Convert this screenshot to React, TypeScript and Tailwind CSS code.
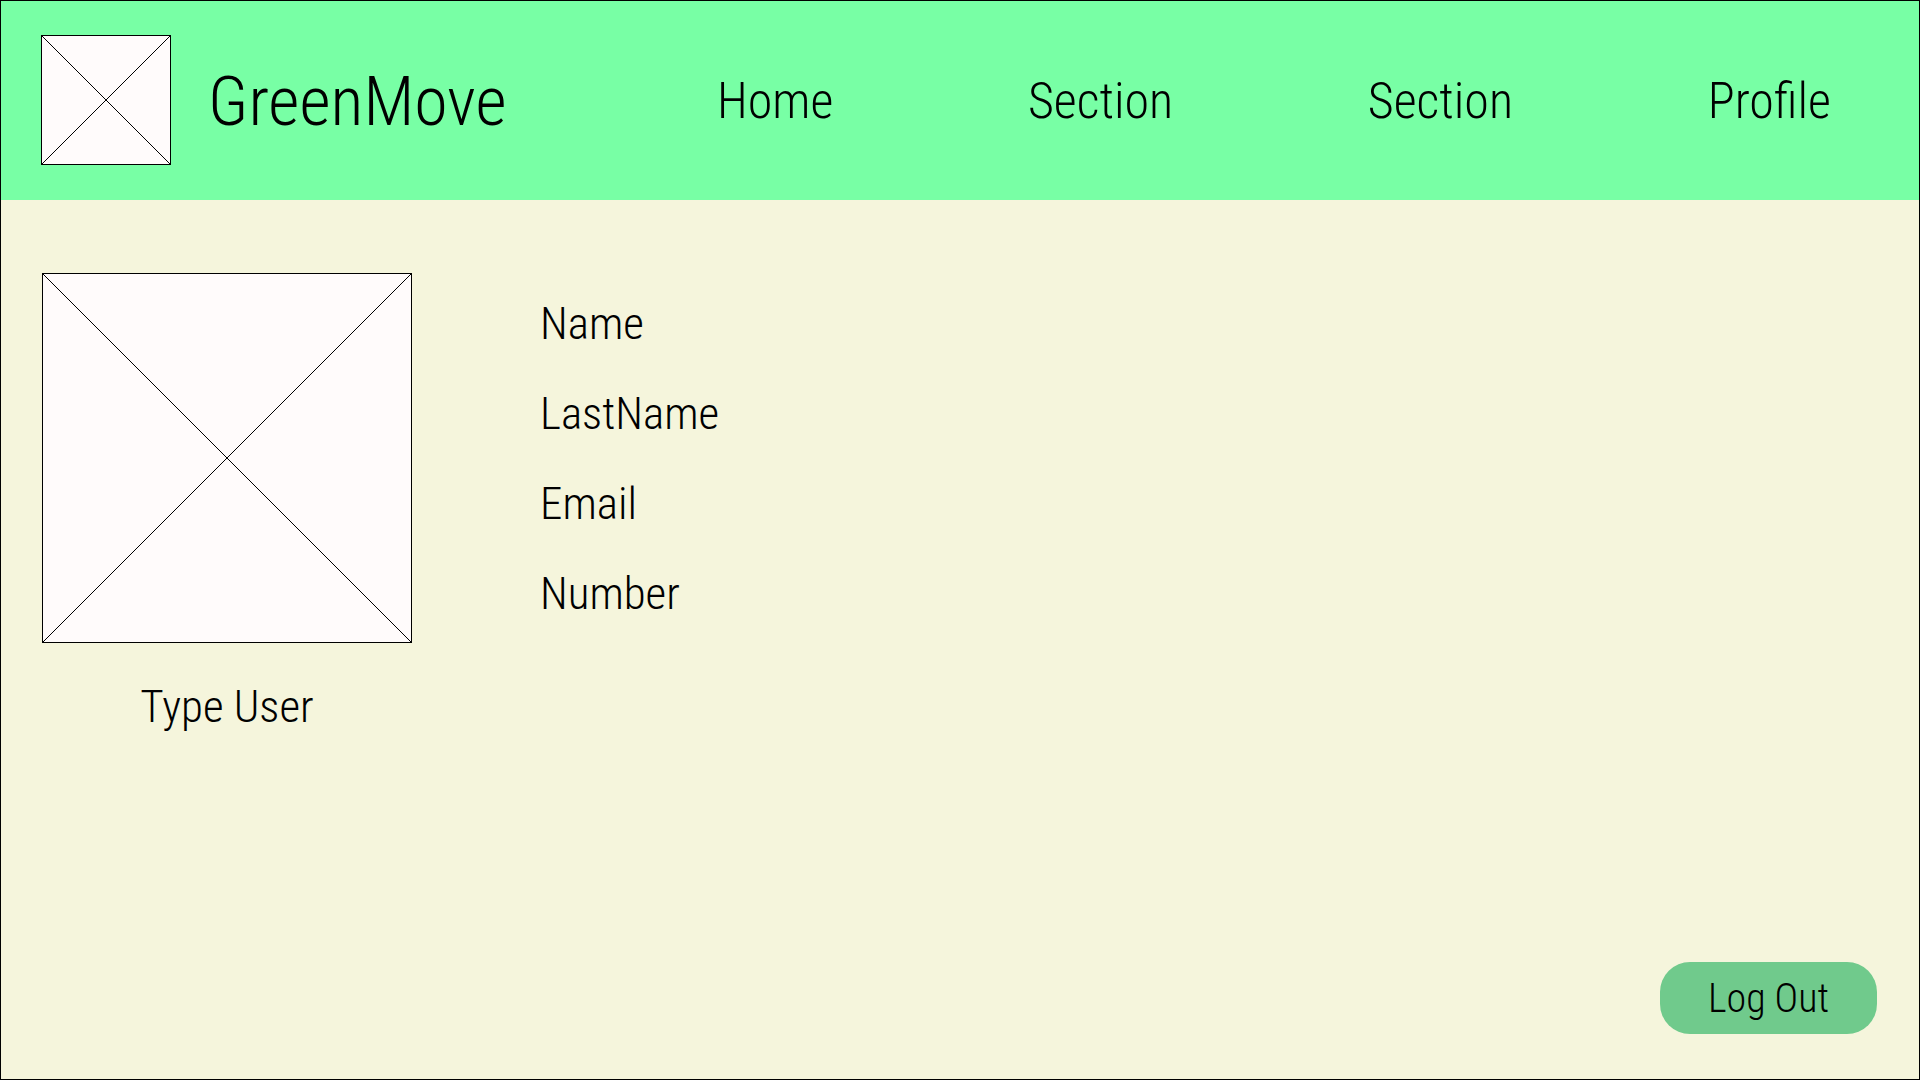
const navItems = ["Home", "Section", "Section", "Profile"];
const fields = ["Name", "LastName", "Email", "Number"];

function Placeholder({ label, className }: { label: string; className: string }) {
  return (
    <svg
      role="img"
      aria-label={label}
      className={`block shrink-0 border border-black bg-[#fffbfb] ${className}`}
    >
      <line x1="0" y1="0" x2="100%" y2="100%" stroke="#000" strokeWidth="1" />
      <line x1="100%" y1="0" x2="0" y2="100%" stroke="#000" strokeWidth="1" />
    </svg>
  );
}

export default function App() {
  return (
    <div className="flex min-h-screen flex-col border border-black bg-[#f5f5dc] font-['Roboto_Condensed','Roboto',sans-serif] font-light text-black">
      <header className="flex items-center bg-[#78ffa5] pt-[34px] pr-[88px] pb-[35px] pl-10">
        <Placeholder label="GreenMove logo" className="size-[130px]" />
        <span className="ml-[37px] w-[509px] shrink-0 pt-[3px] text-[68px] leading-[72px]">GreenMove</span>
        <nav className="flex grow justify-between pt-[2px] text-[50px] leading-[52px]">
          {navItems.map((item, i) => (
            <a key={i} href="#">
              {item}
            </a>
          ))}
        </nav>
      </header>

      <main className="flex grow flex-col justify-between pt-[73px] pr-[42px] pb-[45px] pl-[41px]">
        <div className="flex gap-32">
          <section className="flex flex-col items-center gap-[34px]">
            <Placeholder label="Profile picture" className="size-[370px]" />
            <p className="text-[45px] leading-[60px]">Type User</p>
          </section>
          <ul className="flex flex-col gap-[30px] pt-[21px] text-[45px] leading-[60px]">
            {fields.map((field) => (
              <li key={field}>{field}</li>
            ))}
          </ul>
        </div>
        <button
          type="button"
          className="h-[72px] w-[217px] cursor-pointer self-end rounded-[30px] bg-[#70ca8c] pt-[2px] text-[40px] leading-none"
        >
          Log Out
        </button>
      </main>
    </div>
  );
}
